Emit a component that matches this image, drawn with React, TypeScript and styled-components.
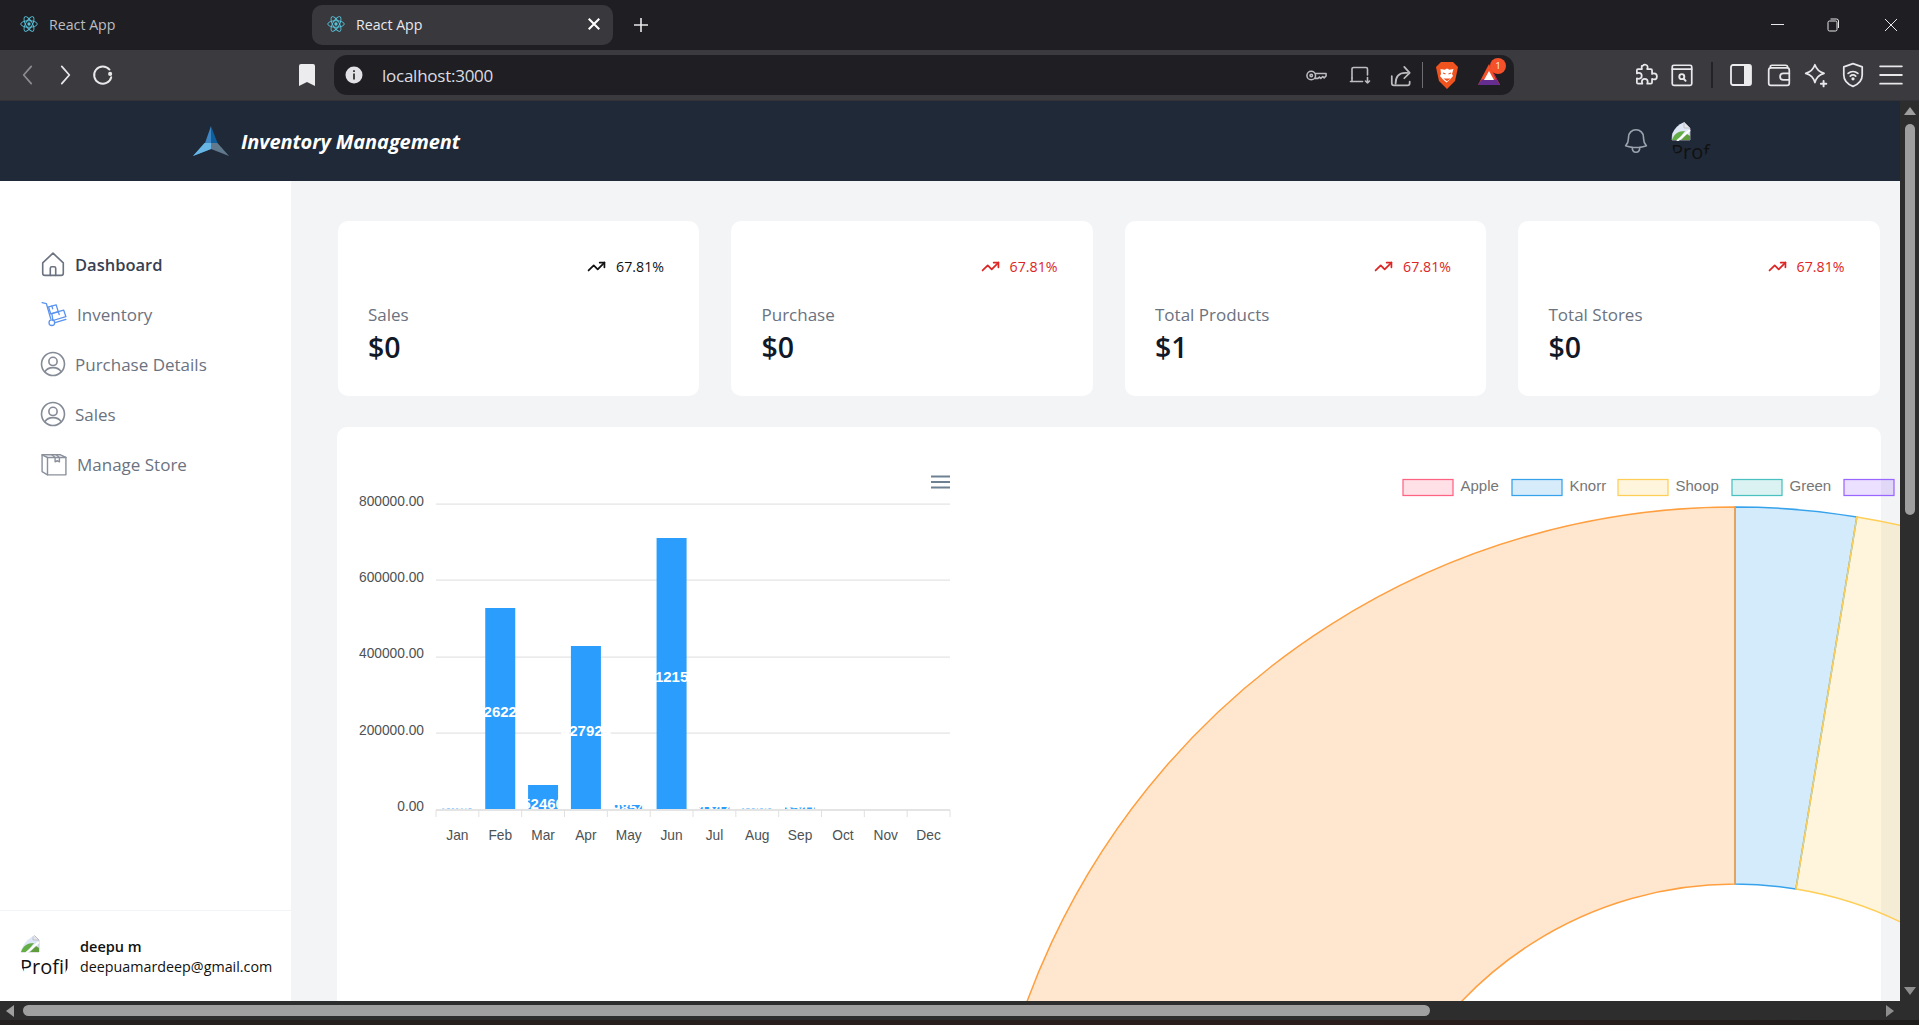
import React from "react";
import styled, { createGlobalStyle } from "styled-components";

const FONT = `"Open Sans", "Noto Sans", sans-serif`;
const CHART_FONT = `"Liberation Sans", Arial, sans-serif`;

const Global = createGlobalStyle`
  html, body { margin: 0; padding: 0; height: 100%; overflow: hidden; background: #202024; }
  * { box-sizing: border-box; }
`;

const Window = styled.div`
  width: 100vw;
  height: 100vh;
  display: flex;
  flex-direction: column;
  overflow: hidden;
  font-family: ${FONT};
`;

// Browser chrome
const TabStrip = styled.div`
  height: 50px;
  flex: none;
  display: flex;
  align-items: center;
  background: #1f1f23;
  padding-left: 20px;
`;

const Tab = styled.div<{ $active?: boolean }>`
  height: 40px;
  width: ${({ $active }) => ($active ? "301px" : "292px")};
  padding: 0 0 2px ${({ $active }) => ($active ? "15px" : "0")};
  display: flex;
  align-items: center;
  gap: 11px;
  border-radius: 10px;
  background: ${({ $active }) => ($active ? "#38383d" : "transparent")};
  color: ${({ $active }) => ($active ? "#e8e8ea" : "#bdbdc0")};
  font-size: 14.2px;
`;

const TabClose = styled.span`
  margin-left: auto;
  margin-right: 12px;
  width: 14px;
  height: 14px;
  display: flex;
`;

const NewTab = styled.div`
  margin-left: 20px;
  width: 16px;
  height: 16px;
  display: flex;
`;

const WindowButtons = styled.div`
  margin-left: auto;
  margin-right: 20px;
  display: flex;
  align-items: center;
`;

const WinButton = styled.div<{ $ml: number }>`
  width: 16px;
  height: 16px;
  margin-left: ${({ $ml }) => $ml}px;
  display: flex;
`;

const Toolbar = styled.div`
  height: 51px;
  flex: none;
  display: flex;
  align-items: center;
  background: #3b3a3f;
  border-bottom: 1px solid #333337;
`;

const Slot = styled.div<{ $w?: number; $ml: number }>`
  width: ${({ $w }) => $w ?? 30}px;
  height: 30px;
  margin-left: ${({ $ml }) => $ml}px;
  flex: none;
  display: flex;
  align-items: center;
  justify-content: center;
  position: relative;
`;

const UrlBar = styled.div`
  width: 1180px;
  height: 40px;
  margin-left: 12px;
  flex: none;
  display: flex;
  align-items: center;
  border-radius: 13px;
  background: #1f1f23;
`;

const UrlText = styled.span`
  margin-left: 13px;
  width: 922px;
  font-size: 17px;
  letter-spacing: -0.25px;
  color: #dcdce0;
`;

const Divider = styled.div<{ $ml: number; $color: string; $w?: number }>`
  width: ${({ $w }) => $w ?? 1}px;
  height: 26px;
  margin-left: ${({ $ml }) => $ml}px;
  background: ${({ $color }) => $color};
  flex: none;
`;

const Badge = styled.span`
  position: absolute;
  top: -2px;
  right: -2px;
  width: 16px;
  height: 16px;
  border-radius: 50%;
  background: #f4502a;
  color: #fff;
  font-size: 9px;
  line-height: 16px;
  text-align: center;
`;

// Page
const PageRow = styled.div`
  flex: 1;
  min-height: 0;
  display: flex;
`;

const Viewport = styled.div`
  flex: 1;
  min-width: 0;
  display: flex;
  flex-direction: column;
  overflow: hidden;
`;

const VScroll = styled.div`
  width: 19px;
  flex: none;
  display: flex;
  flex-direction: column;
  align-items: center;
  background: #2d2d2d;
  padding-top: 6px;
`;

const VThumb = styled.div`
  width: 10px;
  height: 391px;
  margin-top: 9px;
  border-radius: 5px;
  background: #9f9f9f;
`;

const VArrowDown = styled.div`
  margin-top: auto;
  margin-bottom: 6px;
  width: 0;
  height: 0;
  border-left: 6px solid transparent;
  border-right: 6px solid transparent;
  border-top: 8px solid #8e8e8e;
`;

const VArrowUp = styled.div`
  width: 0;
  height: 0;
  border-left: 6px solid transparent;
  border-right: 6px solid transparent;
  border-bottom: 8px solid #9f9f9f;
`;

const HScroll = styled.div`
  height: 19px;
  flex: none;
  display: flex;
  align-items: center;
  background: #2d2d2d;
  padding-left: 6px;
`;

const HArrowLeft = styled.div`
  width: 0;
  height: 0;
  border-top: 6px solid transparent;
  border-bottom: 6px solid transparent;
  border-right: 8px solid #9f9f9f;
`;

const HThumb = styled.div`
  width: 1407px;
  height: 11px;
  margin-left: 9px;
  border-radius: 6px;
  background: #a0a0a0;
`;

const HArrowRight = styled.div`
  margin-left: 456px;
  width: 0;
  height: 0;
  border-top: 6px solid transparent;
  border-bottom: 6px solid transparent;
  border-left: 8px solid #8e8e8e;
`;

const TaskbarEdge = styled.div`
  height: 5px;
  flex: none;
  background: linear-gradient(90deg, #23201f, #2a1d1b 70%, #1f1c1c);
`;

const Header = styled.header`
  height: 80px;
  flex: none;
  display: flex;
  align-items: center;
  background: #1f2937;
  padding-left: 193px;
`;

const Title = styled.span`
  margin-left: 12px;
  color: #fff;
  font-size: 20px;
  font-weight: 700;
  font-style: italic;
  letter-spacing: -0.1px;
`;

const BellWrap = styled.div`
  margin-left: auto;
  width: 30px;
  height: 30px;
  display: flex;
`;

const Avatar = styled.div<{ $size: number; $lh: number; $indent: number }>`
  width: ${({ $size }) => $size}px;
  height: ${({ $size }) => $size}px;
  flex: none;
  overflow: hidden;
  border-radius: 50%;
  color: #111;
  font-size: 20px;
  line-height: ${({ $lh }) => $lh}px;
  text-indent: ${({ $indent }) => $indent}px;
  white-space: nowrap;
  svg { display: block; }
`;

const HeaderAvatar = styled.div`
  margin-left: 20px;
  margin-right: 189px;
`;

const Body = styled.div`
  flex: 1;
  min-height: 0;
  display: flex;
`;

const Sidebar = styled.aside`
  width: 291px;
  flex: none;
  display: flex;
  flex-direction: column;
  background: #fff;
  padding-top: 58px;
`;

const NavItem = styled.div<{ $active?: boolean; $wide?: boolean }>`
  height: 50px;
  display: flex;
  align-items: center;
  gap: ${({ $wide }) => ($wide ? "10px" : "9px")};
  padding-left: ${({ $wide }) => ($wide ? "41px" : "40px")};
  font-size: ${({ $active }) => ($active ? "16.5px" : "17px")};
  font-weight: ${({ $active }) => ($active ? 600 : 500)};
  color: ${({ $active }) => ($active ? "#374151" : "#6b7280")};
  svg { flex: none; }
`;

const SidebarFooter = styled.div`
  margin-top: auto;
  height: 91px;
  display: flex;
  align-items: flex-start;
  gap: 10px;
  padding: 22px 0 0 20px;
  border-top: 1px solid #f3f4f6;
`;

const FooterText = styled.div`
  display: flex;
  flex-direction: column;
  color: #111;
`;

const UserName = styled.strong`
  font-size: 14.5px;
  font-weight: 600;
  line-height: 21px;
  margin-top: 3px;
`;

const UserMail = styled.span`
  font-size: 14.3px;
  line-height: 20px;
`;

const Main = styled.main`
  flex: 1;
  min-width: 0;
  overflow: hidden;
  background: #f3f4f6;
  padding: 40px 19px 0 46px;
`;

const StatGrid = styled.div`
  display: grid;
  grid-template-columns: repeat(4, 361.5px);
  gap: 32px;
  margin-left: 0.5px;
`;

const StatCard = styled.section`
  height: 175px;
  display: flex;
  flex-direction: column;
  border-radius: 10px;
  background: #fff;
  padding: 35px 35px 0 30.5px;
`;

const TrendRow = styled.div<{ $down?: boolean }>`
  display: flex;
  justify-content: flex-end;
  align-items: center;
  gap: 10px;
  height: 20px;
  font-size: 14.2px;
  color: ${({ $down }) => ($down ? "#dc2626" : "#111")};
`;

const StatLabel = styled.div`
  margin-top: 26px;
  font-size: 17px;
  font-weight: 500;
  line-height: 26px;
  color: #6b7280;
`;

const StatValue = styled.div`
  margin-top: 0;
  font-size: 28.5px;
  font-weight: 600;
  line-height: 38px;
  color: #111827;
`;

const ChartCard = styled.section`
  width: 1544px;
  height: 800px;
  margin-top: 31px;
  display: flex;
  border-radius: 10px;
  background: #fff;
`;

const ChartSvg = styled.svg<{ $w: number }>`
  width: ${({ $w }) => $w}px;
  height: 800px;
  flex: none;
  display: block;
  font-family: ${CHART_FONT};
`;

// Icons
const ReactIcon = ({ size = 18 }: { size?: number }) => (
  <svg width={size} height={size} viewBox="-12 -12 24 24" fill="none" stroke="#58c4dc" strokeWidth="1.2">
    <circle r="2.2" fill="#58c4dc" stroke="none" />
    <ellipse rx="11" ry="4.4" />
    <ellipse rx="11" ry="4.4" transform="rotate(60)" />
    <ellipse rx="11" ry="4.4" transform="rotate(120)" />
  </svg>
);

const Cross = ({ color = "#fff", w = 2 }: { color?: string; w?: number }) => (
  <svg width="100%" height="100%" viewBox="0 0 16 16" stroke={color} strokeWidth={w}>
    <path d="M2 2l12 12M14 2L2 14" />
  </svg>
);

const ChromeIcon = ({ children, size = 24, color = "#e8e8ea", sw = 1.6 }: { children: React.ReactNode; size?: number; color?: string; sw?: number }) => (
  <svg width={size} height={size} viewBox="0 0 24 24" fill="none" stroke={color} strokeWidth={sw} strokeLinecap="round" strokeLinejoin="round">
    {children}
  </svg>
);

const Logo = () => (
  <svg width="36" height="30" viewBox="0 0 36 30">
    <path d="M18 0L12 17 0 30 18 23z" fill="#3f86c4" />
    <path d="M18 0l6.5 17L18 17z" fill="#0f5f9c" />
    <path d="M11.5 17L0 30l18-7v-6z" fill="#68b6e6" />
    <path d="M18 17h6.5L36 30l-18-7z" fill="#60798d" />
  </svg>
);

const BrokenImage = () => (
  <svg width="20" height="20" viewBox="0 0 20 20">
    <path d="M1 1h12l6 6v12H1z" fill="#dfe7f7" stroke="#b9bcc4" strokeWidth="0.8" />
    <path d="M13 1v6h6z" fill="#e4e6ec" stroke="#a8abb4" strokeWidth="0.6" />
    <path d="M1 19c2-6 6-9 13-9l-7 9z" fill="#63ad46" />
    <path d="M10 19l6-6 3 2v4z" fill="#5f9c3c" />
    <path d="M6 20L19 9" stroke="#fff" strokeWidth="2" />
  </svg>
);

const NavIcon = ({ children, color = "#6b7280", sw = 1.5 }: { children: React.ReactNode; color?: string; sw?: number }) => (
  <svg width="26" height="26" viewBox="0 0 24 24" fill="none" stroke={color} strokeWidth={sw} strokeLinecap="round" strokeLinejoin="round">
    {children}
  </svg>
);

const UserCircle = () => (
  <NavIcon color="#858b96">
    <circle cx="12" cy="12" r="10.6" />
    <circle cx="12" cy="9.6" r="3.8" />
    <path d="M4.6 19c1.6-2.6 4-3.6 7.4-3.6s5.8 1 7.4 3.6" />
  </NavIcon>
);

const TrendIcon = ({ color }: { color: string }) => (
  <svg width="19" height="19" viewBox="0 0 24 24" fill="none" stroke={color} strokeWidth="2.2" strokeLinecap="round" strokeLinejoin="round">
    <path d="M2 17l6.5-6.5 5 5L22 7" />
    <path d="M16 7h6v6" />
  </svg>
);

// Chart data: bar top, label baseline, label text
const bars: Record<string, [number, number, string]> = {
  Jan: [808.5, 813, "2460"],
  Feb: [608, 716.5, "526220"],
  Mar: [785, 808.5, "52460"],
  Apr: [646, 736, "427924"],
  May: [805, 813, "9854"],
  Jun: [538, 681.5, "712150"],
  Jul: [807, 813, "4347"],
  Aug: [808.5, 813, "1000"],
  Sep: [807.5, 813, "3541"],
};
const months = ["Jan", "Feb", "Mar", "Apr", "May", "Jun", "Jul", "Aug", "Sep", "Oct", "Nov", "Dec"];
const GRID_LEFT = 436;
const GRID_RIGHT = 950;
const AXIS_Y = 809;
const colW = (GRID_RIGHT - GRID_LEFT) / 12;
const gridYs = [504, 580, 657, 733];
const yLabels = ["800000.00", "600000.00", "400000.00", "200000.00", "0.00"];

const BarChart = () => (
  <ChartSvg $w={640} viewBox="337 427 640 800">
    {gridYs.map((y) => (
      <line key={y} x1={GRID_LEFT} x2={GRID_RIGHT} y1={y} y2={y} stroke="#e4e4e4" strokeWidth="1.25" />
    ))}
    {months.map((m, i) => {
      const d = bars[m];
      if (!d) return null;
      const cx = GRID_LEFT + colW * (i + 0.5);
      return <rect key={m} x={cx - 15} y={d[0]} width="30" height={AXIS_Y - d[0]} fill="#2a9dfd" />;
    })}
    {months.map((m, i) => {
      const d = bars[m];
      if (!d) return null;
      const cx = GRID_LEFT + colW * (i + 0.5);
      return (
        <text key={m} x={cx} y={d[1]} textAnchor="middle" fontSize="15" fontWeight="700" fill="#fff">
          {d[2]}
        </text>
      );
    })}
    <line x1={GRID_LEFT} x2={GRID_RIGHT} y1={AXIS_Y + 1} y2={AXIS_Y + 1} stroke="#e4e4e4" strokeWidth="2" />
    {Array.from({ length: 13 }, (_, i) => (
      <line key={i} x1={GRID_LEFT + colW * i} x2={GRID_LEFT + colW * i} y1={AXIS_Y + 1} y2={AXIS_Y + 8} stroke="#e0e0e0" strokeWidth="1" />
    ))}
    {yLabels.map((l, i) => (
      <text key={l} x="424" y={506 + i * 76.2} textAnchor="end" fontSize="13.75" fill="#4d5254">
        {l}
      </text>
    ))}
    {months.map((m, i) => (
      <text key={m} x={GRID_LEFT + colW * (i + 0.5)} y="840" textAnchor="middle" fontSize="13.75" fill="#4d5254">
        {m}
      </text>
    ))}
    <path d="M931 476.5h19M931 482h19M931 487.5h19" stroke="#6e8192" strokeWidth="2" />
  </ChartSvg>
);

const CX = 1735;
const CY = 1261;
const R = 754;
const r = 377;

const arcPath = (a0: number, a1: number) => {
  const pt = (rad: number, deg: number) => {
    const t = (deg * Math.PI) / 180;
    return `${(CX + rad * Math.sin(t)).toFixed(2)} ${(CY - rad * Math.cos(t)).toFixed(2)}`;
  };
  const large = a1 - a0 > 180 ? 1 : 0;
  return `M${pt(R, a0)}A${R} ${R} 0 ${large} 1 ${pt(R, a1)}L${pt(r, a1)}A${r} ${r} 0 ${large} 0 ${pt(r, a0)}Z`;
};

const slices = [
  { from: 0, to: 9.3, rgb: "54,162,235", alpha: 0.22 },
  { from: 9.3, to: 70, rgb: "255,206,86", alpha: 0.2 },
  { from: 230, to: 360, rgb: "255,159,64", alpha: 0.25 },
];

const legend = [
  { label: "Apple", x: 1403, rgb: "255,99,132" },
  { label: "Knorr", x: 1512, rgb: "54,162,235" },
  { label: "Shoop", x: 1618, rgb: "255,206,86" },
  { label: "Green", x: 1732, rgb: "75,192,192" },
  { label: "", x: 1844, rgb: "153,102,255" },
];

const DoughnutChart = () => (
  <ChartSvg $w={923} viewBox="977 427 923 800">
    {slices.map((s) => (
      <path key={s.rgb} d={arcPath(s.from, s.to)} fill={`rgba(${s.rgb},${s.alpha})`} stroke={`rgb(${s.rgb})`} strokeWidth="1.5" />
    ))}
    {legend.map((l) => (
      <g key={l.rgb}>
        <rect x={l.x} y="479.5" width="50" height="16" fill={`rgba(${l.rgb},0.2)`} stroke={`rgb(${l.rgb})`} strokeWidth="1.25" />
        {l.label && (
          <text x={l.x + 57.5} y="491" fontSize="15" fill="#767676">
            {l.label}
          </text>
        )}
      </g>
    ))}
  </ChartSvg>
);

const stats = [
  { label: "Sales", value: "$0", down: false },
  { label: "Purchase", value: "$0", down: true },
  { label: "Total Products", value: "$1", down: true },
  { label: "Total Stores", value: "$0", down: true },
];

export default function App() {
  return (
    <Window>
      <Global />
      <TabStrip>
        <Tab>
          <ReactIcon />
          React App
        </Tab>
        <Tab $active>
          <ReactIcon />
          React App
          <TabClose>
            <Cross w={2.4} />
          </TabClose>
        </Tab>
        <NewTab>
          <svg width="16" height="16" viewBox="0 0 16 16" stroke="#e8e8ea" strokeWidth="1.6">
            <path d="M8 1v14M1 8h14" />
          </svg>
        </NewTab>
        <WindowButtons>
          <WinButton $ml={0}>
            <svg width="16" height="16" viewBox="0 0 16 16" stroke="#e8e8ea" strokeWidth="1">
              <path d="M2 7.5h13" />
            </svg>
          </WinButton>
          <WinButton $ml={40}>
            <svg width="16" height="16" viewBox="0 0 16 16" fill="none" stroke="#e8e8ea" strokeWidth="1">
              <rect x="3" y="4" width="9" height="10" rx="1.5" />
              <path d="M5.5 2h6a2 2 0 0 1 2 2v7" />
            </svg>
          </WinButton>
          <WinButton $ml={42}>
            <Cross color="#e8e8ea" w={1} />
          </WinButton>
        </WindowButtons>
      </TabStrip>
      <Toolbar>
        <Slot $ml={13}>
          <ChromeIcon color="#8b8b90" size={26}><path d="M15 4l-7 8 7 8" /></ChromeIcon>
        </Slot>
        <Slot $ml={7}>
          <ChromeIcon size={26}><path d="M9 4l7 8-7 8" /></ChromeIcon>
        </Slot>
        <Slot $ml={8}>
          <ChromeIcon size={26} sw={1.8}>
            <path d="M18 7a8 8 0 1 0 1.6 7" />
            <circle cx="18.6" cy="11" r="1" fill="#e8e8ea" />
          </ChromeIcon>
        </Slot>
        <Slot $ml={174}>
          <svg width="16" height="22" viewBox="0 0 16 22">
            <path d="M2 0h12a2 2 0 0 1 2 2v20l-8-4-8 4V2a2 2 0 0 1 2-2z" fill="#ececee" />
          </svg>
        </Slot>
        <UrlBar>
          <Slot $ml={5}>
            <svg width="18" height="18" viewBox="0 0 18 18">
              <circle cx="9" cy="9" r="8.5" fill="#e2e2e6" />
              <path d="M9 7.5v6M9 4.3v1.6" stroke="#333" strokeWidth="1.8" />
            </svg>
          </Slot>
          <UrlText>localhost:3000</UrlText>
          <Slot $ml={-3}>
            <ChromeIcon size={23} color="#bdbdc0">
              <circle cx="6.5" cy="12" r="4.5" />
              <circle cx="6.5" cy="12" r="1.3" />
              <path d="M11 10h11v2.5l-2 2-1.5-1.5-2 2-1.5-1.5-1.5 1.5H10.5" />
            </ChromeIcon>
          </Slot>
          <Slot $ml={14}>
            <ChromeIcon size={24} color="#bdbdc0">
              <path d="M4 15V6a1.5 1.5 0 0 1 1.5-1.5H18A1.5 1.5 0 0 1 19.5 6v6" />
              <path d="M2.5 18.5h12" />
              <path d="M4 15v3.5" />
              <path d="M19.5 14.5V20M17.5 18l2 2 2-2" />
            </ChromeIcon>
          </Slot>
          <Slot $ml={11}>
            <ChromeIcon size={26} color="#bdbdc0">
              <path d="M7 20c0-7 3-10 9-10h2" />
              <path d="M15 4.5l5 5.5-5 5" />
              <path d="M3.5 13v6.5a2 2 0 0 0 2 2H18a2 2 0 0 0 2-2V18" />
            </ChromeIcon>
          </Slot>
          <Divider $ml={6} $color="#6d6d72" />
          <Slot $ml={9}>
            <svg width="22" height="27" viewBox="0 0 22 27">
              <path d="M5 0h12l2 2 3 3-1 5-2 9-6 6-2 2-2-2-6-6-2-9-1-5 3-3z" fill="#f1531f" />
              <path d="M4.5 7l4 .7L11 6.5l2.5 1.2 4-.7-1.5 5 1 2-3 3.5-3.5 3-3.5-3-3-3.500 1-2z" fill="#fff" />
              <path d="M7 11l2.500 1M15 11l-2.500 1M9 17h4l-2 1.500z" stroke="#f1531f" strokeWidth="1.1" fill="#f1531f" />
            </svg>
          </Slot>
          <Slot $ml={12}>
            <svg width="24" height="24" viewBox="0 0 24 24">
              <path d="M12 1l11 21H1z" fill="#f4502a" />
              <path d="M1 22l3.5-5.5h15L23 22z" fill="#662d91" />
              <path d="M12 1l11 21-4-5.500z" fill="#9e1f63" />
              <path d="M12 8l5 9H7z" fill="#fff" />
            </svg>
            <Badge>1</Badge>
          </Slot>
        </UrlBar>
        <Slot $ml={116}>
          <ChromeIcon size={26}>
            <path d="M10 3.5a2.500 2.500 0 0 1 4.500 1.200c0 1-.5 1.300-.5 1.800h3.500a1 1 0 0 1 1 1V11c.4 0 .8-.5 1.700-.5a2.800 2.800 0 0 1 0 5.600c-.9 0-1.300-.5-1.700-.5v3.400a1 1 0 0 1-1 1H14c0-.6.500-1 .5-1.800a2.700 2.700 0 0 0-5.400 0c0 .8.500 1.200.5 1.800H5.500a1 1 0 0 1-1-1V15c.6 0 1 .5 1.800.5a2.700 2.700 0 0 0 0-5.400c-.8 0-1.200.4-1.800.4V7.500a1 1 0 0 1 1-1h3.700c0-.5-.5-1-.2-3z" />
          </ChromeIcon>
        </Slot>
        <Slot $ml={7}>
          <ChromeIcon size={26}>
            <rect x="3" y="3" width="18" height="18.5" rx="1.5" />
            <path d="M3 6.500h18" />
            <circle cx="11.8" cy="13.5" r="2.3" strokeWidth="1.8" />
            <path d="M13.500 15.500l1.800 1.800" strokeWidth="1.8" />
          </ChromeIcon>
        </Slot>
        <Divider $ml={14} $color="#232327" $w={2} />
        <Slot $ml={13}>
          <svg width="22" height="24" viewBox="0 0 22 24" fill="none">
            <rect x="1" y="2" width="20" height="20" rx="2" stroke="#ececee" strokeWidth="1.8" />
            <rect x="14" y="2" width="7" height="20" fill="#ececee" />
          </svg>
        </Slot>
        <Slot $ml={8}>
          <ChromeIcon size={26}>
            <rect x="2.5" y="5.5" width="19" height="16" rx="2" />
            <path d="M4 5.500V4.500A1.500 1.500 0 0 1 5.500 3H18a2 2 0 0 1 2 2" />
            <path d="M21.500 10.500H16a3 3 0 0 0 0 6h5.500" />
          </ChromeIcon>
        </Slot>
        <Slot $ml={7}>
          <ChromeIcon size={26}>
            <path d="M11 2.500c1.500 4.500 3.500 6.500 8.500 8-5 1.500-7 3.500-8.500 8.500-1.500-5-3.500-7-8.500-8.500 5-1.500 7-3.500 8.500-8z" />
            <path d="M19 17.500v5M16.500 20h5" strokeWidth="1.8" />
          </ChromeIcon>
        </Slot>
        <Slot $ml={7}>
          <ChromeIcon size={26}>
            <path d="M12 1.500l8.500 3V12c0 5-3.500 8.500-8.500 10.500-5-2-8.500-5.500-8.500-10.500V4.500z" />
            <path d="M7.500 10.500a7 7 0 0 1 9 0M9.500 13a3.600 3.600 0 0 1 5 0" />
            <circle cx="12" cy="15.5" r="0.7" fill="#e8e8ea" />
          </ChromeIcon>
        </Slot>
        <Slot $ml={8}>
          <ChromeIcon size={26} sw={1.7}>
            <path d="M2 4h20M2 12h20M2 20h20" />
          </ChromeIcon>
        </Slot>
      </Toolbar>
      <PageRow>
        <Viewport>
          <Header>
            <Logo />
            <Title>Inventory Management</Title>
            <BellWrap>
              <svg width="30" height="30" viewBox="0 0 24 24" fill="none" stroke="#9ca3af" strokeWidth="1.3" strokeLinecap="round" strokeLinejoin="round">
                <path d="M14.86 17.08a24 24 0 0 0 5.45-1.31A8.970 8.970 0 0 1 18 9.750V9a6 6 0 0 0-12 0v.75a8.970 8.970 0 0 1-2.310 6.020 23.850 23.850 0 0 0 5.450 1.310m5.710 0a24.250 24.250 0 0 1-5.710 0m5.710 0a3 3 0 1 1-5.710 0" />
              </svg>
            </BellWrap>
            <HeaderAvatar>
              <Avatar $size={40} $lh={22} $indent={-4}>
                <BrokenImage />
                Profile
              </Avatar>
            </HeaderAvatar>
          </Header>
          <Body>
            <Sidebar>
              <NavItem $active>
                <NavIcon>
                  <path d="M2.500 11L12 2l9.500 9v9.500a2 2 0 0 1-2 2h-15a2 2 0 0 1-2-2z" />
                  <path d="M9.500 22.500V16a1.500 1.500 0 0 1 1.500-1.500h2a1.500 1.500 0 0 1 1.500 1.500v6.500" />
                </NavIcon>
                Dashboard
              </NavItem>
              <NavItem $wide>
                <NavIcon color="#5b93ef" sw={1.2}>
                  <path d="M1 1.500l4 1 4 14" />
                  <circle cx="10" cy="20" r="2.6" />
                  <path d="M13 20l10-3" />
                  <path d="M7 5.500l7-2 2 6.500-7 2z" />
                  <path d="M10 10.500l11-3 2 6-12 3.500z" transform="translate(0 1)" />
                  <path d="M10 4.700l.8 2.500M16 10l.8 2.500" />
                </NavIcon>
                Inventory
              </NavItem>
              <NavItem>
                <UserCircle />
                Purchase Details
              </NavItem>
              <NavItem>
                <UserCircle />
                Sales
              </NavItem>
              <NavItem $wide>
                <NavIcon color="#8a919c" sw={1.3}>
                  <path d="M1 3.500h17l5 2.500v16H6l-5-3z" />
                  <path d="M6 22V6h17" />
                  <path d="M6 6L1 3.500" />
                  <path d="M10 3.500l3 2.500v4l2-1 2 1V6l-3-2.500" />
                </NavIcon>
                Manage Store
              </NavItem>
              <SidebarFooter>
                <Avatar $size={50} $lh={27} $indent={1}>
                  <BrokenImage />
                  Profile
                </Avatar>
                <FooterText>
                  <UserName>deepu m</UserName>
                  <UserMail>deepuamardeep@gmail.com</UserMail>
                </FooterText>
              </SidebarFooter>
            </Sidebar>
            <Main>
              <StatGrid>
                {stats.map((s) => (
                  <StatCard key={s.label}>
                    <TrendRow $down={s.down}>
                      <TrendIcon color={s.down ? "#dc2626" : "#111"} />
                      67.81%
                    </TrendRow>
                    <StatLabel>{s.label}</StatLabel>
                    <StatValue>{s.value}</StatValue>
                  </StatCard>
                ))}
              </StatGrid>
              <ChartCard>
                <BarChart />
                <DoughnutChart />
              </ChartCard>
            </Main>
          </Body>
        </Viewport>
        <VScroll>
          <VArrowUp />
          <VThumb />
          <VArrowDown />
        </VScroll>
      </PageRow>
      <HScroll>
        <HArrowLeft />
        <HThumb />
        <HArrowRight />
      </HScroll>
      <TaskbarEdge />
    </Window>
  );
}
